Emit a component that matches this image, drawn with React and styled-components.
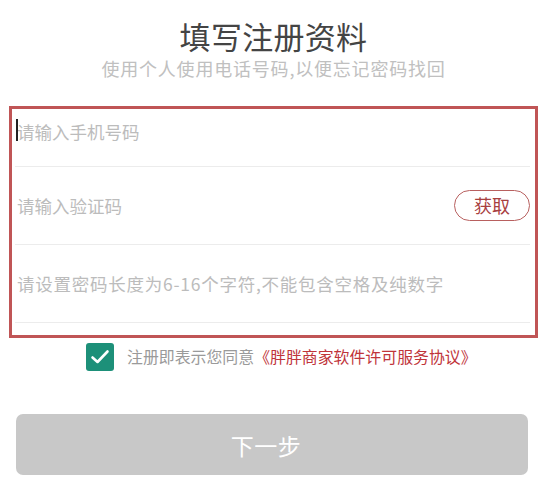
import React from 'react';
import styled, { createGlobalStyle } from 'styled-components';

const GlobalStyle = createGlobalStyle`
  html, body {
    margin: 0;
    padding: 0;
    background: #ffffff;
  }
  body {
    font-family: "Noto Sans CJK SC", "Noto Sans", sans-serif;
  }
`;

const Page = styled.div`
  width: 547px;
  height: 481px;
  box-sizing: border-box;
  padding: 20px 0 0;
  background: #fff;
  overflow: hidden;
`;

const Header = styled.header`
  display: flex;
  flex-direction: column;
  align-items: center;
  gap: 8px;
`;

const Title = styled.h1`
  margin: 0;
  font-size: 31px;
  line-height: 31px;
  font-weight: 400;
  color: #444;
  letter-spacing: 0.3px;
`;

const SubTitle = styled.p`
  margin: 0;
  font-size: 18px;
  line-height: 18px;
  color: #c0c0c0;
  letter-spacing: 0.8px;
`;

const Form = styled.div`
  margin: 29px 0 0 9px;
  width: 529px;
  box-sizing: border-box;
  border: 3px solid #c05556;
  padding: 0 5px 12px 3px;
  display: flex;
  flex-direction: column;
`;

const Row = styled.div`
  height: ${props => props.height}px;
  border-bottom: 1px solid #ececec;
  display: flex;
  align-items: center;
  justify-content: space-between;
  padding: 0 0 0 2px;
  position: relative;
`;

const Placeholder = styled.span`
  font-size: 17.5px;
  line-height: 18px;
  color: #bcbcbc;
  letter-spacing: ${props => props.spacing || 0}px;
  padding-bottom: ${props => props.lift || 0}px;
`;

const Caret = styled.span`
  position: absolute;
  left: 1px;
  top: 10px;
  width: 1.5px;
  height: 22px;
  background: #222;
`;

const GetButton = styled.button`
  width: 76px;
  height: 31px;
  margin-right: 0;
  margin-top: -1px;
  box-sizing: border-box;
  border: 1.5px solid #b8605f;
  border-radius: 16px;
  background: #fff;
  color: #a8403f;
  font-family: inherit;
  font-size: 18px;
  line-height: 18px;
  padding: 0;
`;

const Agreement = styled.div`
  display: flex;
  align-items: center;
  gap: 13px;
  margin: 5px 0 0 86px;
`;

const CheckBox = styled.span`
  width: 28px;
  height: 28px;
  border-radius: 3px;
  background: #1d9079;
  display: flex;
  align-items: center;
  justify-content: center;
`;

const AgreeText = styled.span`
  font-size: 15.9px;
  line-height: 16px;
  color: #9a9a9a;
`;

const AgreeLink = styled.span`
  color: #c0343a;
`;

const NextButton = styled.button`
  display: block;
  margin: 43px 0 0 16px;
  width: 512px;
  height: 61px;
  border: none;
  border-radius: 7px;
  background: #c8c8c8;
  color: #fff;
  font-family: inherit;
  font-size: 23px;
  letter-spacing: 0.5px;
  padding: 0 12px 0 0;
`;

export default function App() {
  return (
    <Page>
      <GlobalStyle />
      <Header>
        <Title>填写注册资料</Title>
        <SubTitle>使用个人使用电话号码,以便忘记密码找回</SubTitle>
      </Header>

      <Form>
        <Row height={57}>
          <Caret />
          <Placeholder lift={12}>请输入手机号码</Placeholder>
        </Row>
        <Row height={77}>
          <Placeholder>请输入验证码</Placeholder>
          <GetButton>获取</GetButton>
        </Row>
        <Row height={77}>
          <Placeholder spacing={0.75}>请设置密码长度为6-16个字符,不能包含空格及纯数字</Placeholder>
        </Row>
      </Form>

      <Agreement>
        <CheckBox>
          <svg width="20" height="16" viewBox="0 0 20 16">
            <path d="M2.5 8.5 L7.5 13 L17.5 2.5" fill="none" stroke="#fff" strokeWidth="2.6" strokeLinecap="round" strokeLinejoin="round" />
          </svg>
        </CheckBox>
        <AgreeText>
          注册即表示您同意<AgreeLink>《胖胖商家软件许可服务协议》</AgreeLink>
        </AgreeText>
      </Agreement>

      <NextButton>下一步</NextButton>
    </Page>
  );
}
